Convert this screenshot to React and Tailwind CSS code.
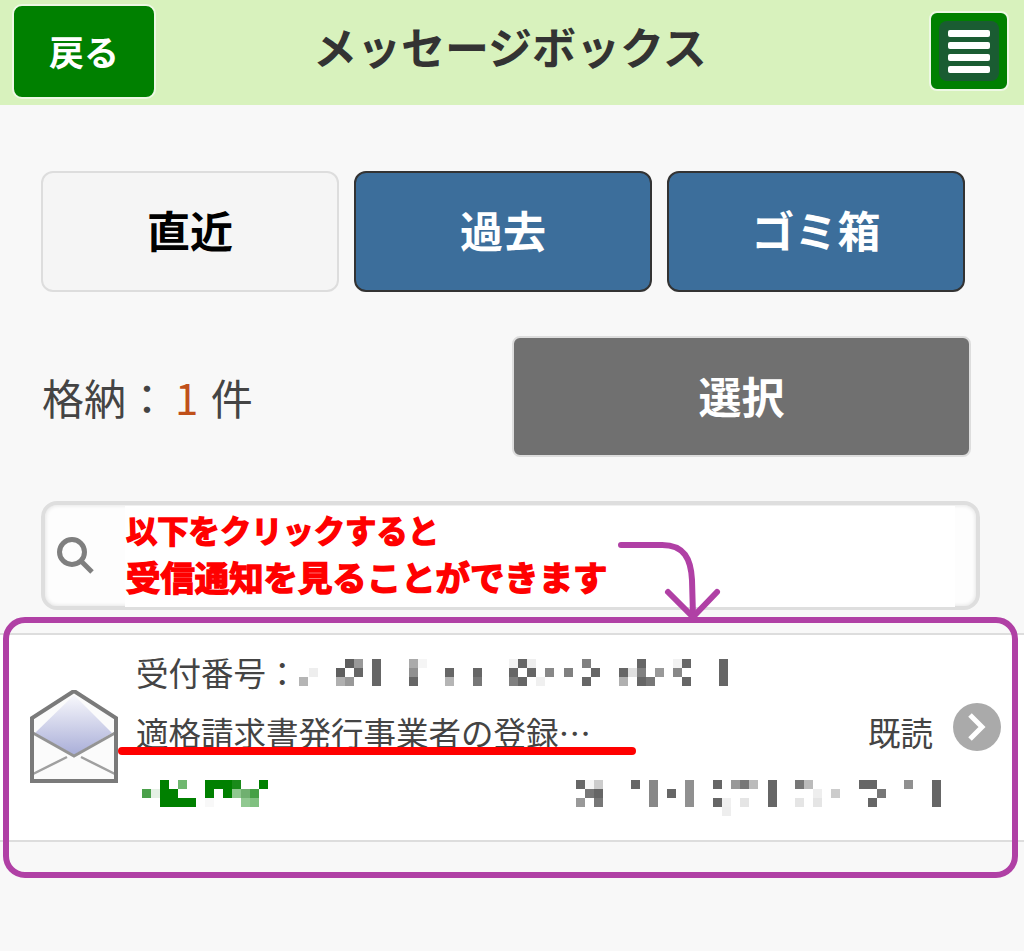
import React from 'react';

const jp = '[font-family:"Noto_Sans_CJK_JP","Noto_Sans",sans-serif]';

// mosaic cells: [x, row, colour], 9px squares
const numberCells = [
  [298, 2, '#b5b5b5'], [308, 1, '#eeeeee'],
  [335, 1, '#5f5f5f'], [335, 2, '#b0b0b0'], [344, 0, '#5f5f5f'], [344, 2, '#999999'], [353, 0, '#999999'], [353, 1, '#666666'],
  [371, 0, '#666666'], [371, 1, '#666666'], [371, 2, '#666666'],
  [408, 0, '#aaaaaa'], [408, 1, '#909090'], [408, 2, '#666666'], [417, 0, '#f5f5f5'],
  [444, 1, '#666666'], [444, 2, '#b5b5b5'],
  [472, 1, '#666666'], [472, 2, '#777777'],
  [508, 0, '#f2f2f2'], [508, 1, '#666666'], [508, 2, '#808080'],
  [517, 0, '#666666'], [517, 2, '#666666'],
  [526, 0, '#eeeeee'], [526, 1, '#666666'], [535, 2, '#f0f0f0'],
  [544, 1, '#888888'], [563, 1, '#808080'],
  [581, 0, '#808080'], [581, 2, '#666666'], [590, 1, '#666666'],
  [618, 1, '#666666'], [618, 2, '#b0b0b0'], [627, 1, '#e0e0e0'],
  [636, 0, '#666666'], [636, 1, '#808080'], [636, 2, '#666666'], [645, 2, '#777777'], [654, 1, '#999999'],
  [672, 0, '#f2f2f2'], [672, 1, '#888888'], [681, 0, '#666666'], [681, 2, '#666666'],
  [718, 0, '#666666'], [718, 1, '#666666'], [718, 2, '#666666'],
];

const dateCells = [
  [575, 0, '#666666'], [575, 2, '#999999'], [584, 0, '#f5f5f5'], [584, 1, '#777777'],
  [593, 0, '#cccccc'], [593, 1, '#666666'], [593, 2, '#777777'],
  [630, 0, '#666666'],
  [648, 0, '#888888'], [648, 1, '#888888'], [648, 2, '#888888'],
  [666, 1, '#666666'],
  [684, 0, '#909090'], [684, 1, '#909090'], [684, 2, '#909090'],
  [712, 0, '#666666'], [712, 2, '#666666'], [721, 2, '#f0f0f0'], [721, 3, '#eeeeee'],
  [730, 0, '#999999'], [739, 0, '#777777'], [739, 2, '#e5e5e5'], [748, 0, '#bbbbbb'],
  [767, 0, '#666666'], [767, 1, '#666666'], [767, 2, '#666666'],
  [794, 0, '#777777'], [794, 2, '#e5e5e5'], [803, 0, '#bbbbbb'],
  [812, 1, '#eeeeee'], [812, 2, '#e5e5e5'], [830, 1, '#cccccc'],
  [858, 0, '#666666'], [867, 0, '#666666'], [867, 2, '#666666'], [876, 1, '#777777'],
  [903, 0, '#909090'],
  [931, 0, '#666666'], [931, 1, '#666666'], [931, 2, '#666666'],
];

const nameCells = [
  [142, 1, '#4aa04a'], [151, 1, '#e4f0e4'],
  [160, 0, '#008000'], [160, 1, '#008000'], [160, 2, '#008000'],
  [169, 1, '#008000'], [169, 2, '#008000'],
  [178, 0, '#70b870'], [178, 2, '#008000'], [187, 2, '#008000'],
  [205, 0, '#008000'], [205, 1, '#008000'], [205, 2, '#f8f8f8'],
  [214, 0, '#008000'], [223, 0, '#008000'], [223, 1, '#008000'],
  [232, 0, '#1a8a1a'], [232, 1, '#90c890'],
  [241, 1, '#70b070'], [241, 2, '#90c890'],
  [250, 1, '#45a045'], [250, 2, '#80c080'], [259, 0, '#008000'],
];

const Mosaic = ({ cells, from, width, rows = 3, className = '' }) => (
  <svg width={width} height={rows * 9} viewBox={`${from} 0 ${width} ${rows * 9}`} shapeRendering="crispEdges" className={`shrink-0 ${className}`}>
    {cells.map(([x, row, color], i) => (
      <rect key={i} x={x} y={row * 9} width="9" height="9" fill={color} />
    ))}
  </svg>
);

const Envelope = () => (
  <svg width="88" height="93" viewBox="0 0 88 93" className="shrink-0">
    <defs>
      <linearGradient id="flap" x1="0" y1="0" x2="0" y2="1">
        <stop offset="0" stopColor="#f8f8fc" />
        <stop offset="1" stopColor="#a9aed8" />
      </linearGradient>
    </defs>
    <path d="M2 28 L44 1 L86 28 V91 H2 Z" fill="#fbfbfb" />
    <path d="M5 43 L44 5 L82 43 L44 65 Z" fill="url(#flap)" />
    <path d="M3 43 L44 66 L85 43" fill="none" stroke="#949494" strokeWidth="3" />
    <path d="M3 84 L37 67 M85 84 L51 67" fill="none" stroke="#a0a0a0" strokeWidth="2.5" />
    <path d="M2 91 V28 L44 1 L86 28 V91 Z" fill="none" stroke="#7a7a7a" strokeWidth="4" />
  </svg>
);

const Tab = ({ label, active }) => (
  <button
    className={`flex h-[121px] w-[298px] items-center justify-center rounded-xl border-2 pb-[5px] text-[43px] font-bold ${
      active ? 'border-[#dddddd] bg-[#f5f5f5] text-black' : 'border-[#333333] bg-[#3c6e9b] text-white'
    }`}
  >
    {label}
  </button>
);

export default function App() {
  return (
    <div className={`relative h-[951px] w-[1024px] overflow-hidden bg-[#f8f8f8] ${jp}`}>
      <header className="flex h-[105px] items-center justify-between bg-[#d8f2bd] pl-3 pr-[15px]">
        <button className="mb-[3px] flex h-[95px] w-[144px] items-center justify-center rounded-[10px] border-2 border-[#eef8e4] bg-[#008000] text-[35px] font-bold text-white">
          戻る
        </button>
        <h1 className="absolute left-[313px] top-[14px] text-[44px] font-bold leading-[64px] text-[#333333]">メッセージボックス</h1>
        <button className="mb-[3px] flex h-[80px] w-[80px] items-center justify-center rounded-lg border-2 border-[#eef8e4] bg-[#008000]">
          <span className="flex h-[60px] w-[60px] flex-col items-center justify-center gap-[5px] rounded-lg bg-[#1a5c32]">
            <span className="h-[7px] w-[42px] rounded-[2px] bg-white" />
            <span className="h-[7px] w-[42px] rounded-[2px] bg-white" />
            <span className="h-[7px] w-[42px] rounded-[2px] bg-white" />
            <span className="h-[7px] w-[42px] rounded-[2px] bg-white" />
          </span>
        </button>
      </header>

      <div className="mt-[66px] flex gap-[15px] pl-[41px]">
        <Tab label="直近" active />
        <Tab label="過去" />
        <Tab label="ゴミ箱" />
      </div>

      <div className="mt-11 flex items-center justify-between pl-[42px] pr-[53px]">
        <p className="text-[42px] leading-none text-[#444444]">
          格納：<span className="ml-[7px] mr-[3px] text-[#c0501a]">1</span> 件
        </p>
        <button className="h-[121px] w-[459px] rounded-lg border-2 border-[#dddddd] bg-[#707070] pb-[3px] text-[43px] font-bold text-white">選択</button>
      </div>

      <div className="ml-[41px] mt-11 flex h-[109px] w-[939px] items-center rounded-[16px] border-4 border-[#dedede] bg-[#fdfdfd] pl-3 shadow-[inset_0_0_4px_#dddddd]">
        <svg width="38" height="38" viewBox="0 0 38 38" fill="none" stroke="#7f7f7f">
          <circle cx="15" cy="15" r="12.5" strokeWidth="5" />
          <path d="M24 24 L35 35" strokeWidth="5" />
        </svg>
      </div>

      <section className="mt-[23px] h-[209px] border-y-2 border-[#dddddd] bg-white">
        <div className="flex h-full items-start pl-[30px]">
          <div className="mt-[55px]">
            <Envelope />
          </div>
          <div className="ml-[18px] flex-1 pr-[23px] pt-[17px]">
            <div className="flex h-[40px] items-center text-[32.5px] leading-none text-[#444444]">
              <span>受付番号：</span>
              <Mosaic cells={numberCells} from={298} width={430} />
            </div>
            <div className="mt-[17px] flex h-[46px] items-center justify-between text-[32.5px] leading-none text-[#444444]">
              <span>適格請求書発行事業者の登録…</span>
              <span className="flex items-center">
                既読
                <span className="mb-[10px] ml-[20px] flex h-[48px] w-[48px] items-center justify-center rounded-full bg-[#aaaaaa]">
                  <svg width="20" height="30" viewBox="0 0 20 30" fill="none" stroke="white" strokeWidth="5">
                    <path d="M3 3 L15 15 L3 27" />
                  </svg>
                </span>
              </span>
            </div>
            <div className="mt-[25px] flex h-[36px] items-start justify-between pr-[60px]">
              <Mosaic cells={nameCells} from={142} width={127} className="ml-[6px]" />
              <Mosaic cells={dateCells} from={575} width={365} rows={4} />
            </div>
          </div>
        </div>
      </section>

      {/* hand-drawn annotation on top of the screenshot */}
      <div className="absolute left-[125px] top-[506px] h-[101px] w-[830px] bg-white pl-px pt-[5px] font-bold text-[#ff0000] [-webkit-text-stroke:1.5px_#ff0000]">
        <p className="text-[31.3px] leading-[38px]">以下をクリックすると</p>
        <p className="mt-[8px] text-[34.4px] leading-[38px]">受信通知を見ることができます</p>
      </div>
      <div className="absolute left-[3px] top-[617px] h-[261px] w-[1015px] rounded-[22px] border-[6px] border-[#b040a5]" />
      <svg className="absolute left-[610px] top-[530px]" width="120" height="92" viewBox="0 0 120 92" fill="none" stroke="#b040a5" strokeWidth="6" strokeLinecap="round">
        <path d="M11 15 H50 C75 14 81 30 82 50 L83 86" />
        <path d="M58 62 L83 87 L107 62" />
      </svg>
      <div className="absolute left-[118px] top-[747px] h-[8px] w-[518px] rounded-full bg-[#ff0000]" />
    </div>
  );
}
